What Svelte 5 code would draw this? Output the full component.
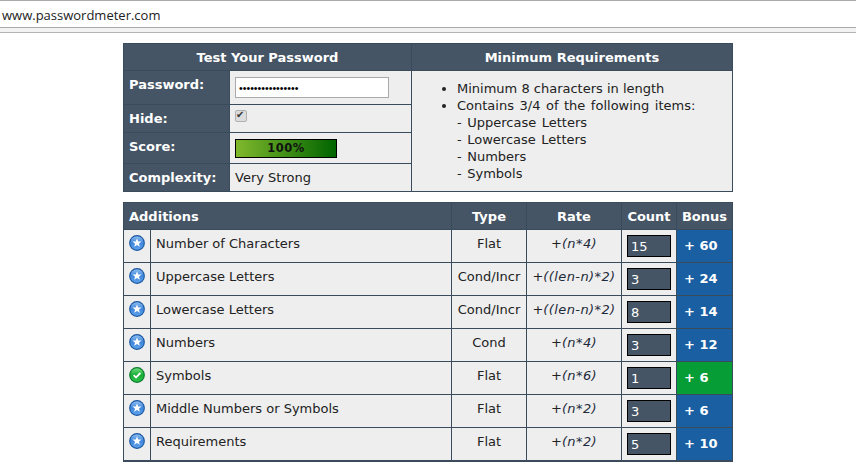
<script>
    const additions = [
        { name: 'Number of Characters', type: 'Flat', rate: ['+', '(n*4)'], count: 15, bonus: '+ 60', icon: 'star' },
        { name: 'Uppercase Letters', type: 'Cond/Incr', rate: ['+', '((len-n)*2)'], count: 3, bonus: '+ 24', icon: 'star' },
        { name: 'Lowercase Letters', type: 'Cond/Incr', rate: ['+', '((len-n)*2)'], count: 8, bonus: '+ 14', icon: 'star' },
        { name: 'Numbers', type: 'Cond', rate: ['+', '(n*4)'], count: 3, bonus: '+ 12', icon: 'star' },
        { name: 'Symbols', type: 'Flat', rate: ['+', '(n*6)'], count: 1, bonus: '+ 6', icon: 'check' },
        { name: 'Middle Numbers or Symbols', type: 'Flat', rate: ['+', '(n*2)'], count: 3, bonus: '+ 6', icon: 'star' },
        { name: 'Requirements', type: 'Flat', rate: ['+', '(n*2)'], count: 5, bonus: '+ 10', icon: 'star' },
    ];
</script>

<div class="addressbar">www.passwordmeter.com</div>
<div class="strip"></div>

<main class="content">
    <table class="top">
        <colgroup>
            <col class="c-label" />
            <col class="c-value" />
            <col />
        </colgroup>
        <tbody>
            <tr class="head">
                <th colspan="2">Test Your Password</th>
                <th>Minimum Requirements</th>
            </tr>
            <tr class="r-pass">
                <th class="label">Password:</th>
                <td><input class="pass" type="password" value="abcdefghijklmnop" /></td>
                <td rowspan="4" class="reqs">
                    <ul>
                        <li>Minimum 8 characters in length</li>
                        <li class="items">Contains 3/4 of the following items:
                            <br />- Uppercase Letters
                            <br />- Lowercase Letters
                            <br />- Numbers
                            <br />- Symbols
                        </li>
                    </ul>
                </td>
            </tr>
            <tr class="r-hide">
                <th class="label">Hide:</th>
                <td><input class="hide" type="checkbox" checked /></td>
            </tr>
            <tr class="r-score">
                <th class="label">Score:</th>
                <td><div class="score">100%</div></td>
            </tr>
            <tr class="r-comp">
                <th class="label">Complexity:</th>
                <td>Very Strong</td>
            </tr>
        </tbody>
    </table>

    <table class="adds">
        <colgroup>
            <col class="c-icon" />
            <col />
            <col class="c-type" />
            <col class="c-rate" />
            <col class="c-count" />
            <col class="c-bonus" />
        </colgroup>
        <tbody>
            <tr class="head">
                <th colspan="2" class="left">Additions</th>
                <th>Type</th>
                <th>Rate</th>
                <th>Count</th>
                <th>Bonus</th>
            </tr>
            {#each additions as row, i (row.name)}
                <tr class="row">
                    <td class="icon">
                        <svg width="16" height="16" viewBox="0 0 16 16">
                            <defs>
                                <linearGradient id="fill-{i}" x1="0" y1="0" x2="0" y2="1">
                                    {#if row.icon === 'star'}
                                        <stop offset="0" stop-color="#8dbdf0" />
                                        <stop offset="0.5" stop-color="#3f86dc" />
                                        <stop offset="1" stop-color="#5fa2ea" />
                                    {:else}
                                        <stop offset="0" stop-color="#6fdc7c" />
                                        <stop offset="0.5" stop-color="#16ad36" />
                                        <stop offset="1" stop-color="#2cc24a" />
                                    {/if}
                                </linearGradient>
                            </defs>
                            <circle cx="8" cy="8" r="7.9" fill={row.icon === 'star' ? '#14539f' : '#067a2a'} />
                            <circle cx="8" cy="8" r="6.8" fill="url(#fill-{i})" />
                            {#if row.icon === 'star'}
                                <path d="M8 3.4l1.3 3 3.2.2-2.5 2.1.8 3.1L8 10.1l-2.8 1.7.8-3.1-2.5-2.1 3.2-.2z" fill="#fff" />
                            {:else}
                                <path d="M4.6 8.2l2.4 2.2 4.4-4.4" fill="none" stroke="#fff" stroke-width="1.8" />
                            {/if}
                        </svg>
                    </td>
                    <td class="name">{row.name}</td>
                    <td class="center">{row.type}</td>
                    <td class="center rate">{row.rate[0]}<em>{row.rate[1]}</em></td>
                    <td class="count"><div class="box">{row.count}</div></td>
                    <td class="bonus {row.icon === 'check' ? 'good' : ''}">{row.bonus}</td>
                </tr>
            {/each}
        </tbody>
    </table>
</main>

<style>
    :global(body) {
        margin: 0;
        background: #fff;
        overflow: hidden;
    }

    .addressbar {
        height: 26px;
        border-top: 1px solid #a9a9a9;
        border-bottom: 1px solid #a9a9a9;
        padding-left: 2px;
        font: 13px/28px 'Open Sans', 'Liberation Sans', sans-serif;
        color: #222;
    }

    .strip {
        height: 4px;
        background: #f2f2f2;
        border-bottom: 1px solid #b4b4b4;
    }

    .content {
        width: 610px;
        margin: 10px auto 0;
        display: flex;
        flex-direction: column;
        gap: 10px;
    }

    table {
        width: 610px;
        table-layout: fixed;
        border-collapse: collapse;
        font: 13px 'DejaVu Sans', Verdana, sans-serif;
        color: #222;
        background: #eee;
    }

    th, td {
        border: 1px solid #3a4b5c;
        padding: 0;
    }

    th {
        background: #455565;
        color: #fff;
        font-weight: bold;
    }

    .head {
        height: 27px;
    }

    .c-label { width: 106px; }
    .c-value { width: 182px; }

    .label {
        text-align: left;
        padding-left: 5px;
    }

    .top td {
        padding-left: 5px;
    }

    .r-pass { height: 34px; }
    .r-hide { height: 28px; }
    .r-score { height: 31px; }
    .r-comp { height: 28px; }

    .r-pass .label { padding-bottom: 6px; }
    .r-score .label { padding-bottom: 4px; }

    .pass {
        display: block;
        box-sizing: border-box;
        width: 154px;
        height: 21px;
        margin: 0;
        padding: 1px 3px;
        border: 1px solid #a9a9a9;
        background: #fff;
        font: 10.6px 'Liberation Sans', sans-serif;
    }

    .hide {
        appearance: none;
        display: block;
        box-sizing: border-box;
        width: 12px;
        height: 12px;
        margin: 0 0 6px 0;
        border: 1px solid #b0b0b0;
        border-radius: 2px;
        background: #dcdcdc;
        position: relative;
    }

    .hide::before {
        content: '✔';
        position: absolute;
        left: 0;
        top: -2px;
        font-size: 10px;
        line-height: 12px;
        color: #333;
    }

    .score {
        box-sizing: border-box;
        width: 102px;
        height: 19px;
        border: 1px solid #000;
        background: linear-gradient(to right, #80b82c, #006400);
        text-align: center;
        font-size: 11.5px;
        font-weight: bold;
        letter-spacing: 0.5px;
        line-height: 17px;
        color: #111;
    }

    .reqs {
        vertical-align: top;
    }

    ul {
        margin: 0;
        padding: 9px 0 0 40px;
        line-height: 17px;
    }

    .items {
        word-spacing: 1.4px;
    }

    .c-icon { width: 27px; }
    .c-type { width: 75px; }
    .c-rate { width: 95px; }
    .c-count { width: 55px; }
    .c-bonus { width: 56px; }

    .left {
        text-align: left;
        padding-left: 5px;
    }

    .row {
        height: 33px;
    }

    .row td {
        vertical-align: top;
    }

    .row:last-child td {
        border-bottom-width: 2px;
    }

    .icon svg {
        display: block;
        margin: 5px 0 0 5px;
    }

    .row .name {
        padding: 6px 0 0 5px;
    }

    .row .center {
        text-align: center;
        padding-top: 6px;
    }

    .rate em {
        font-style: italic;
        letter-spacing: 0.4px;
        color: #1d2a3a;
    }

    .row .count {
        padding: 5px 0 0 5px;
    }

    .box {
        box-sizing: border-box;
        width: 44px;
        height: 22px;
        border: 1px solid #000;
        background: #455565;
        color: #fff;
        padding-left: 3px;
        line-height: 21px;
        font-size: 13px;
    }

    .row .bonus {
        background: #1b5fa3;
        color: #fff;
        font-weight: bold;
        padding: 8px 0 0 7px;
    }

    .row .bonus.good {
        background: #069c36;
    }
</style>
